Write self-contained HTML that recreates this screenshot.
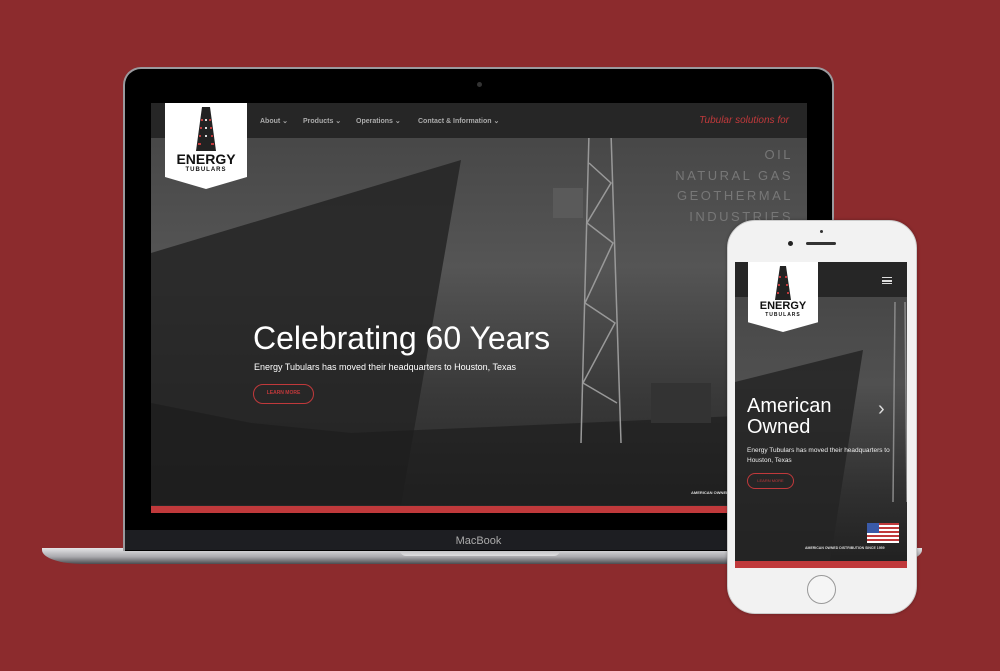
<!DOCTYPE html>
<html><head><style>
*{margin:0;padding:0;box-sizing:border-box}
body{width:1000px;height:671px;background:#8c2b2d;position:relative;overflow:hidden;font-family:"Liberation Sans",sans-serif}
.abs{position:absolute}
.nav{position:absolute;top:14px;color:#aaa;font-size:7px;font-weight:bold;white-space:nowrap}
</style></head><body>
<!-- laptop base -->
<div class="abs" style="left:42px;top:548px;width:880px;height:16px;border-radius:0 0 40px 40px/0 0 14px 14px;background:linear-gradient(#e4e4e6,#a9a9ad 55%,#4c4c50)"></div>
<div class="abs" style="left:400px;top:549px;width:160px;height:7px;background:linear-gradient(#bdbdc0,#dcdcde);border-radius:0 0 6px 6px"></div>
<!-- lid -->
<div class="abs" style="left:123px;top:67px;width:711px;height:484px;background:#000;border-radius:18px 18px 0 0;border:2px solid #9a9a9e;border-bottom:none"></div>
<div class="abs" style="left:477px;top:82px;width:5px;height:5px;border-radius:50%;background:#333"></div>
<div class="abs" style="left:125px;top:530px;width:707px;height:20px;background:#1d1e22;color:#aaa;font-size:11px;text-align:center;line-height:22px">MacBook</div>
<!-- screen -->
<div class="abs" style="left:151px;top:103px;width:656px;height:410px;overflow:hidden;background:linear-gradient(180deg,#444 0%,#555 40%,#3a3a3a 70%,#262626 100%)">
<svg class="abs" style="left:0;top:0" width="656" height="410"><polygon points="0,150 310,57 250,402 0,402" fill="#242424" opacity=".85"/>
<polygon points="0,300 100,320 200,330 656,310 656,402 0,402" fill="#1a1a1a" opacity=".6"/>
<g stroke="#999" stroke-width="1.5" fill="none"><line x1="438" y1="30" x2="430" y2="340"/><line x1="460" y1="30" x2="470" y2="340"/><path d="M438 60 L460 80 L436 120 L462 140 L434 200 L464 220 L432 280 L466 300"/></g>
<rect x="402" y="85" width="30" height="30" fill="#5a5a5a"/><rect x="500" y="280" width="60" height="40" fill="#333"/></svg>
<div class="abs" style="left:0;top:0;width:656px;height:35px;background:#262626"></div>
<div class="nav" style="left:109px">About ⌄</div>
<div class="nav" style="left:152px">Products ⌄</div>
<div class="nav" style="left:205px">Operations ⌄</div>
<div class="nav" style="left:267px">Contact &amp; Information ⌄</div>
<div class="abs" style="right:18px;top:12px;color:#c0393b;font-size:10px;font-style:italic">Tubular solutions for</div>
<div class="abs" style="right:14px;top:42px;color:#777;font-size:13px;letter-spacing:2.5px;text-align:right;line-height:20.5px">OIL<br>NATURAL GAS<br>GEOTHERMAL<br>INDUSTRIES</div>
<div class="abs" style="left:14px;top:0;width:82px;height:86px;background:#fff;clip-path:polygon(0 0,100% 0,100% 86%,50% 100%,0 86%)"></div>
<svg class="abs" style="left:43px;top:4px" width="24" height="44"><polygon points="8,0 16,0 22,44 2,44" fill="#222"/><g fill="#c0393b"><rect x="7" y="12" width="2" height="2"/><rect x="15" y="12" width="2" height="2"/><rect x="6" y="20" width="2" height="2"/><rect x="16" y="20" width="2" height="2"/><rect x="5" y="28" width="2" height="2"/><rect x="17" y="28" width="2" height="2"/><rect x="4" y="36" width="3" height="2"/><rect x="17" y="36" width="3" height="2"/></g><g fill="#ddd"><rect x="11" y="12" width="2" height="2"/><rect x="11" y="20" width="2" height="2"/><rect x="11" y="28" width="2" height="2"/></g></svg>
<div class="abs" style="left:16px;top:50px;width:78px;text-align:center;font-weight:900;font-size:14px;color:#111;line-height:13px">ENERGY<div style="font-size:6px;letter-spacing:1px;line-height:8px">TUBULARS</div></div>
<div class="abs" style="left:102px;top:217px;color:#fff;font-size:32px;font-weight:300">Celebrating 60 Years</div>
<div class="abs" style="left:103px;top:259px;color:#fff;font-size:9px">Energy Tubulars has moved their headquarters to Houston, Texas</div>
<div class="abs" style="left:102px;top:281px;width:61px;height:20px;border:1.5px solid #c0393b;border-radius:10px;color:#c0393b;font-size:5px;text-align:center;line-height:17px;font-weight:bold">LEARN MORE</div>
<div class="abs" style="left:540px;top:387px;color:#ddd;font-size:4px;font-weight:bold">AMERICAN OWNED</div>
<div class="abs" style="left:0;top:403px;width:656px;height:7px;background:#c0393b"></div>
</div>
<!-- phone -->
<div class="abs" style="left:727px;top:220px;width:190px;height:394px;background:#f2f2f2;border-radius:28px;border:1px solid #ccc;box-shadow:0 0 3px rgba(0,0,0,.3)"></div>
<div class="abs" style="left:788px;top:241px;width:5px;height:5px;border-radius:50%;background:#222"></div>
<div class="abs" style="left:806px;top:242px;width:30px;height:3px;border-radius:2px;background:#333"></div>
<div class="abs" style="left:820px;top:230px;width:3px;height:3px;border-radius:50%;background:#333"></div>
<div class="abs" style="left:807px;top:575px;width:29px;height:29px;border-radius:50%;border:1.5px solid #999;background:#f5f5f5"></div>
<div class="abs" style="left:735px;top:262px;width:172px;height:306px;overflow:hidden;background:linear-gradient(180deg,#444,#505050 40%,#303030 75%,#202020)">
<svg class="abs" style="left:0;top:0" width="172" height="306"><polygon points="0,120 128,88 95,300 0,300" fill="#242424" opacity=".85"/><g stroke="#888" stroke-width="1.5"><line x1="160" y1="40" x2="158" y2="240"/><line x1="170" y1="40" x2="172" y2="240"/></g></svg>
<div class="abs" style="left:0;top:0;width:172px;height:35px;background:#262626"></div>
<div class="abs" style="left:147px;top:15px;width:10px;height:7px;border-top:1.5px solid #ddd;border-bottom:1.5px solid #ddd"></div>
<div class="abs" style="left:147px;top:18px;width:10px;height:1.5px;background:#ddd"></div>
<div class="abs" style="left:13px;top:0;width:70px;height:70px;background:#fff;clip-path:polygon(0 0,100% 0,100% 86%,50% 100%,0 86%)"></div>
<svg class="abs" style="left:38px;top:4px" width="20" height="34"><polygon points="7,0 13,0 18,34 2,34" fill="#222"/><g fill="#c0393b"><rect x="6" y="10" width="2" height="2"/><rect x="12" y="10" width="2" height="2"/><rect x="5" y="18" width="2" height="2"/><rect x="13" y="18" width="2" height="2"/><rect x="4" y="26" width="2" height="2"/><rect x="14" y="26" width="2" height="2"/></g></svg>
<div class="abs" style="left:13px;top:39px;width:70px;text-align:center;font-weight:900;font-size:11px;color:#111;line-height:11px">ENERGY<div style="font-size:5px;letter-spacing:1px;line-height:6px">TUBULARS</div></div>
<div class="abs" style="left:12px;top:134px;color:#fff;font-size:20px;font-weight:300;line-height:21px">American<br>Owned</div>
<div class="abs" style="left:143px;top:136px;color:#ddd;font-size:20px;font-weight:100">›</div>
<div class="abs" style="left:12px;top:184px;color:#eee;font-size:6.5px;line-height:10px;width:160px">Energy Tubulars has moved their headquarters to Houston, Texas</div>
<div class="abs" style="left:12px;top:211px;width:47px;height:16px;border:1.5px solid #c0393b;border-radius:8px;color:#c0393b;font-size:4px;text-align:center;line-height:13px">LEARN MORE</div>
<div class="abs" style="left:132px;top:261px;width:32px;height:20px;background:repeating-linear-gradient(#c0393b 0 2px,#fff 2px 4px)"></div>
<div class="abs" style="left:132px;top:261px;width:12px;height:10px;background:#3a5aa8"></div>
<div class="abs" style="left:70px;top:284px;color:#ddd;font-size:3.5px;font-weight:bold">AMERICAN OWNED DISTRIBUTION SINCE 1959</div>
<div class="abs" style="left:0;top:299px;width:172px;height:7px;background:#c0393b"></div>
</div>
</body></html>
